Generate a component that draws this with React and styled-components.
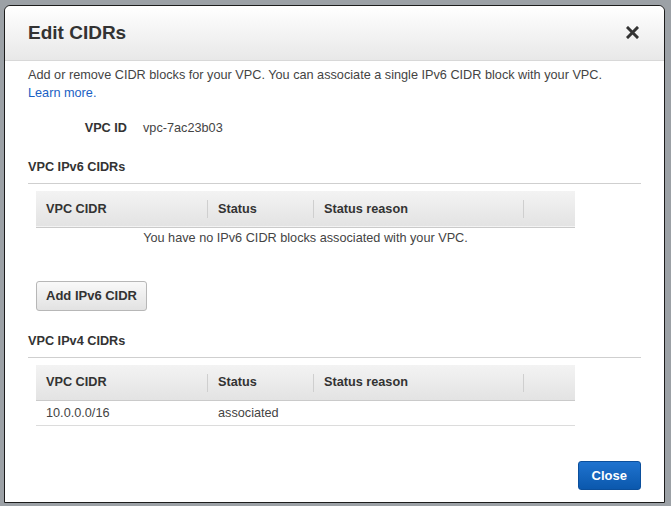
import styled, { createGlobalStyle } from "styled-components"

const GlobalStyle = createGlobalStyle`
    html, body {
        margin: 0;
        padding: 0;
        background: #9ca1a6;
        font-family: "Liberation Sans", Arial, sans-serif;
    }
`

const Backdrop = styled.div`
    width: 671px;
    height: 506px;
    padding: 5px 0 0 4px;
    box-sizing: border-box;
    overflow: hidden;
`

const Modal = styled.div`
    width: 661px;
    height: 498px;
    box-sizing: border-box;
    background: #fff;
    border: 1px solid #1c1c1c;
    border-radius: 6px 6px 0 0;
    display: flex;
    flex-direction: column;
    color: #444;
    font-size: 12.7px;
`

const Header = styled.div`
    height: 54px;
    display: flex;
    align-items: center;
    justify-content: space-between;
    padding: 0 24px 0 23px;
    background: linear-gradient(to bottom, #ffffff 0%, #e8e8e8 100%);
    border-radius: 6px 6px 0 0;
    border-bottom: 1px solid #d8d8d8;
    h1 {
        margin: 0;
        font-size: 19px;
        font-weight: bold;
        color: #333;
    }
`

const CloseX = styled.button`
    border: none;
    background: transparent;
    padding: 0;
    width: 14px;
    height: 14px;
    display: flex;
    cursor: pointer;
`

const Body = styled.div`
    flex: 1;
    padding: 5px 23px 0 23px;
    display: flex;
    flex-direction: column;
`

const Intro = styled.p`
    margin: 0;
    line-height: 18px;
    a {
        color: #1a5fc4;
        text-decoration: none;
    }
`

const IdRow = styled.div`
    display: flex;
    gap: 16px;
    margin: 17px 0 0 0;
    line-height: 18px;
    b {
        width: 99px;
        text-align: right;
        color: #333;
    }
`

const SectionTitle = styled.div`
    font-weight: bold;
    color: #333;
    line-height: 18px;
    padding-bottom: 7px;
    border-bottom: 1px solid #cfcfcf;
    margin-top: ${p => p.$top}px;
`

const Table = styled.table`
    width: 539px;
    margin: 7px 0 0 8px;
    border-collapse: collapse;
    table-layout: fixed;
`

const HeadRow = styled.tr`
    height: 36px;
    background: linear-gradient(to bottom, #f3f3f3 0%, #e3e3e3 100%);
    border-bottom: 1px solid #cacaca;
`

const Th = styled.th`
    box-sizing: border-box;
    text-align: left;
    font-weight: bold;
    color: #333;
    padding: 0 10px;
    width: ${p => (p.$w ? `${p.$w}px` : "auto")};
    position: relative;
    &:not(:last-child)::after {
        content: "";
        position: absolute;
        right: 0;
        top: 9px;
        height: 18px;
        border-right: 1px solid #cfcfcf;
    }
`

const Td = styled.td`
    padding: 0 10px;
    height: ${p => (p.$center ? 20 : 24)}px;
    text-align: ${p => (p.$center ? "center" : "left")};
`

const DataRow = styled.tr`
    border-bottom: 1px solid #dcdcdc;
`

const GrayButton = styled.button`
    margin: 33px 0 0 8px;
    align-self: flex-start;
    height: 30px;
    padding: 0 9px;
    font-family: inherit;
    font-size: 13px;
    font-weight: bold;
    color: #333;
    background: linear-gradient(to bottom, #f9f9f9 0%, #e2e2e2 100%);
    border: 1px solid #b7b7b7;
    border-radius: 3px;
`

const Footer = styled.div`
    display: flex;
    justify-content: flex-end;
    padding: 0 23px 12px 0;
`

const BlueButton = styled.button`
    height: 29px;
    padding: 0 13px;
    font-family: inherit;
    font-size: 13px;
    font-weight: bold;
    color: #fff;
    background: linear-gradient(to bottom, #1f73cf 0%, #0b58ad 100%);
    border: 1px solid #0b4f9c;
    border-radius: 3px;
`

function CidrTable({ rows, empty }) {
    return (
        <Table>
            <thead>
                <HeadRow>
                    <Th $w={172}>VPC CIDR</Th>
                    <Th $w={106}>Status</Th>
                    <Th $w={210}>Status reason</Th>
                    <Th></Th>
                </HeadRow>
            </thead>
            <tbody>
                {rows.length === 0 ? (
                    <tr>
                        <Td colSpan={4} $center>{empty}</Td>
                    </tr>
                ) : rows.map((r, i) =>
                    <DataRow key={i}>
                        <Td>{r.cidr}</Td>
                        <Td>{r.status}</Td>
                        <Td>{r.reason}</Td>
                        <Td></Td>
                    </DataRow>
                )}
            </tbody>
        </Table>
    )
}

export default function App() {
    return (
        <Backdrop>
            <GlobalStyle />
            <Modal>
                <Header>
                    <h1>Edit CIDRs</h1>
                    <CloseX aria-label="Close">
                        <svg width="13" height="13" viewBox="0 0 13 13">
                            <path d="M2 2 L11 11 M11 2 L2 11" stroke="#333" strokeWidth="3" strokeLinecap="square" />
                        </svg>
                    </CloseX>
                </Header>
                <Body>
                    <Intro>
                        Add or remove CIDR blocks for your VPC. You can associate a single IPv6 CIDR block with your VPC.
                        <br />
                        <a href="#">Learn more.</a>
                    </Intro>
                    <IdRow>
                        <b>VPC ID</b>
                        <span>vpc-7ac23b03</span>
                    </IdRow>
                    <SectionTitle $top={21}>VPC IPv6 CIDRs</SectionTitle>
                    <CidrTable rows={[]} empty="You have no IPv6 CIDR blocks associated with your VPC." />
                    <GrayButton>Add IPv6 CIDR</GrayButton>
                    <SectionTitle $top={21}>VPC IPv4 CIDRs</SectionTitle>
                    <CidrTable rows={[{ cidr: "10.0.0.0/16", status: "associated", reason: "" }]} />
                </Body>
                <Footer>
                    <BlueButton>Close</BlueButton>
                </Footer>
            </Modal>
        </Backdrop>
    )
}
